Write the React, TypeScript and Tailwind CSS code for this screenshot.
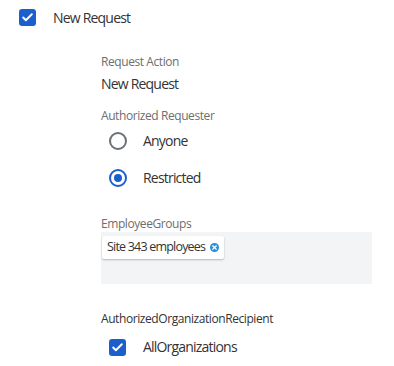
import { Check, X } from 'lucide-react';

function Checkbox() {
  return (
    <span className="flex h-[17px] w-[17px] items-center justify-center rounded-[3px] bg-[#1b5fce]">
      <Check className="h-[13px] w-[13px] text-white" strokeWidth={3.5} />
    </span>
  );
}

function Radio({ checked }: { checked?: boolean }) {
  return (
    <span
      className={
        checked
          ? 'flex h-[18px] w-[18px] items-center justify-center rounded-full border-2 border-[#1b5fce]'
          : 'flex h-[18px] w-[18px] items-center justify-center rounded-full border-2 border-[#6b6f76]'
      }
    >
      {checked ? <span className="h-[8px] w-[8px] rounded-full bg-[#1b5fce]" /> : null}
    </span>
  );
}

export default function App() {
  return (
    <div className="min-h-[366px] w-[394px] bg-white font-['Open_Sans',sans-serif] tracking-[-0.05em] text-[#333]">
      <div className="flex items-center gap-[17px] pl-[19px] pt-[9px]">
        <Checkbox />
        <span className="text-[14px] leading-[17px]">New Request</span>
      </div>

      <div className="pl-[101px] pr-[22px] pt-[28px]">
        <p className="text-[12px] leading-[16px] tracking-[-0.035em] text-[#6e6e6e]">Request Action</p>
        <p className="mt-[4px] text-[14px] leading-[19px]">New Request</p>

        <p className="mt-[15px] text-[12px] leading-[16px] tracking-[-0.035em] text-[#6e6e6e]">Authorized Requester</p>
        <div className="mt-[8px] flex flex-col gap-[19px] pl-[8px]">
          <label className="flex items-center gap-[16px]">
            <Radio />
            <span className="text-[14px] leading-[18px]">Anyone</span>
          </label>
          <label className="flex items-center gap-[16px]">
            <Radio checked />
            <span className="text-[14px] leading-[18px]">Restricted</span>
          </label>
        </div>

        <p className="mt-[29px] text-[12px] leading-[16px] tracking-[-0.035em] text-[#6e6e6e]">EmployeeGroups</p>
        <div className="h-[52px] bg-[#f3f4f6] p-[1px]">
          <span className="inline-flex h-[23px] items-center gap-[5px] rounded-[2px] bg-white px-[5px] text-[12.5px] shadow-[0_1px_2px_rgba(0,0,0,0.25)]">
            Site 343 employees
            <span className="flex h-[9px] w-[9px] items-center justify-center rounded-full bg-[#2a8fd6]">
              <X className="h-[7px] w-[7px] text-white" strokeWidth={4} />
            </span>
          </span>
        </div>

        <p className="mt-[27px] text-[12px] leading-[16px] tracking-[-0.035em] text-[#333]">AuthorizedOrganizationRecipient</p>
        <label className="mt-[11px] flex items-center gap-[17px] pl-[8px]">
          <Checkbox />
          <span className="text-[14px] leading-[18px]">AllOrganizations</span>
        </label>
      </div>
    </div>
  );
}
